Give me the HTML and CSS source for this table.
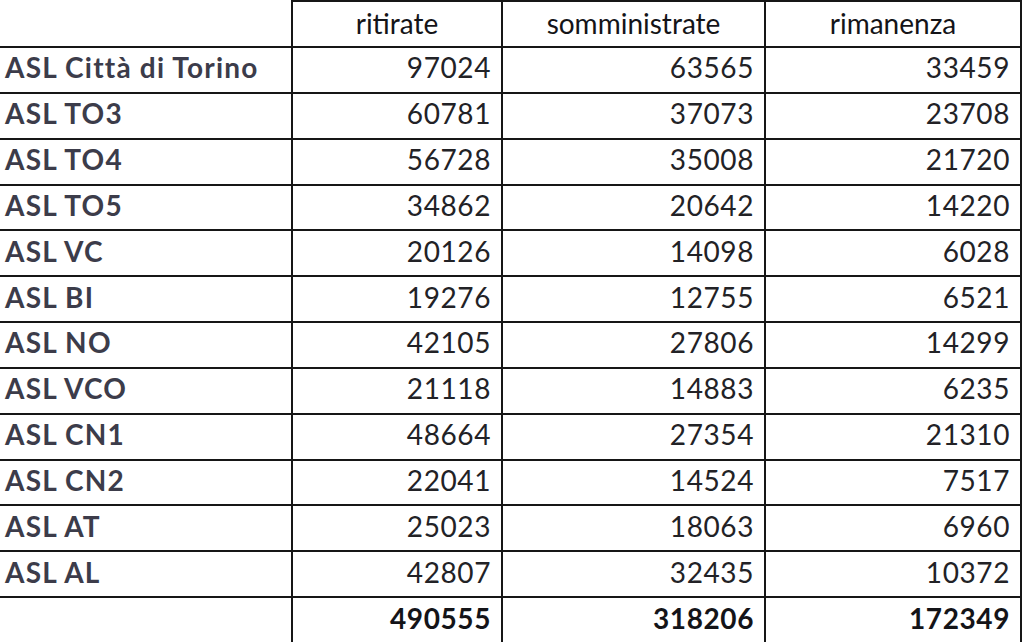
FILE: index.html
```html
<!DOCTYPE html>
<html lang="it">
<head>
<meta charset="utf-8">
<title>Dosi vaccino per ASL</title>
<link rel="stylesheet" href="styles.css">
</head>
<body>
<table class="sheet">
  <colgroup>
    <col class="c-name">
    <col class="c-rit">
    <col class="c-som">
    <col class="c-rim">
  </colgroup>
  <thead>
    <tr class="head">
      <th class="corner"></th>
      <th>ritirate</th>
      <th>somministrate</th>
      <th>rimanenza</th>
    </tr>
  </thead>
  <tbody>
    <tr><th class="name">ASL Città di Torino</th><td>97024</td><td>63565</td><td>33459</td></tr>
    <tr><th class="name">ASL TO3</th><td>60781</td><td>37073</td><td>23708</td></tr>
    <tr><th class="name">ASL TO4</th><td>56728</td><td>35008</td><td>21720</td></tr>
    <tr><th class="name">ASL TO5</th><td>34862</td><td>20642</td><td>14220</td></tr>
    <tr><th class="name">ASL VC</th><td>20126</td><td>14098</td><td>6028</td></tr>
    <tr><th class="name">ASL BI</th><td>19276</td><td>12755</td><td>6521</td></tr>
    <tr><th class="name">ASL NO</th><td>42105</td><td>27806</td><td>14299</td></tr>
    <tr><th class="name">ASL VCO</th><td>21118</td><td>14883</td><td>6235</td></tr>
    <tr><th class="name">ASL CN1</th><td>48664</td><td>27354</td><td>21310</td></tr>
    <tr><th class="name">ASL CN2</th><td>22041</td><td>14524</td><td>7517</td></tr>
    <tr><th class="name">ASL AT</th><td>25023</td><td>18063</td><td>6960</td></tr>
    <tr><th class="name">ASL AL</th><td>42807</td><td>32435</td><td>10372</td></tr>
    <tr class="total"><th class="name"></th><td>490555</td><td>318206</td><td>172349</td></tr>
  </tbody>
</table>
</body>
</html>
```
FILE: styles.css
```css
html, body {
  margin: 0;
  padding: 0;
  background: #ffffff;
}

.sheet {
  border-collapse: collapse;
  table-layout: fixed;
  width: 1021px;
  font-family: Lato, "Open Sans", sans-serif;
  font-size: 28px;
  color: #222226;
}

.c-name { width: 292px; }
.c-rit { width: 210px; }
.c-som { width: 263px; }
.c-rim { width: 256px; }

.sheet th,
.sheet td {
  border: 2px solid #161616;
  padding: 0 10px 5px 10px;
  white-space: nowrap;
  overflow: hidden;
}

.head {
  height: 46px;
}

.head th {
  font-weight: 400;
  text-align: center;
  color: #141418;
  padding-bottom: 3px;
}

.head .corner {
  border-top: none;
  border-left: none;
}

tbody tr {
  height: 45.85px;
}

.sheet td {
  text-align: right;
  letter-spacing: 0.6px;
}

.sheet .name {
  border-left: none;
  text-align: left;
  padding-left: 5px;
  font-weight: 700;
  letter-spacing: 1.2px;
  color: #3c3c4a;
}

.total td {
  font-weight: 700;
  color: #141418;
}
```
